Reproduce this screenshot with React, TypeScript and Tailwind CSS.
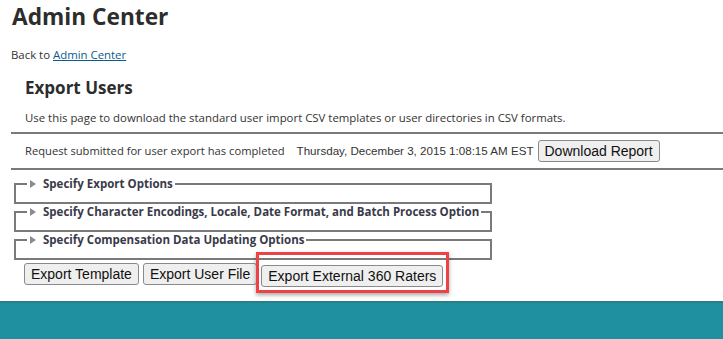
import React from "react";

const sans = "font-['Open_Sans',sans-serif]";
const arial = "font-['Liberation_Sans',Arial,sans-serif]";

const sections = [
  "Specify Export Options",
  "Specify Character Encodings, Locale, Date Format, and Batch Process Option",
  "Specify Compensation Data Updating Options",
];

function Legend({ label }: { label: string }) {
  return (
    <legend className="ml-[11px] flex items-center pr-[2px] text-[11.5px] leading-[13px] font-bold text-[#3a3a4a]">
      <span className="mr-[7px] ml-[3px] inline-block h-0 w-0 border-y-[4px] border-l-[6px] border-y-transparent border-l-[#8c8c8c]" />
      {label}
    </legend>
  );
}

function Btn({ children }: { children: React.ReactNode }) {
  return (
    <button
      className={`${arial} h-[22px] rounded-[3px] border border-[#8a8a8a] bg-[#efefef] px-[6px] text-[14px] leading-[20px] text-[#111]`}
    >
      {children}
    </button>
  );
}

export default function App() {
  return (
    <div className={`${sans} h-[339px] w-[723px] overflow-hidden bg-white text-[#333]`}>
      <h1 className="ml-[12px] pt-[1px] text-[22.7px] leading-[32px] font-bold text-[#2d2d2d]">Admin Center</h1>
      <p className="ml-[11px] mt-[14px] text-[11.4px] leading-[15px] text-[#333]">
        Back to{" "}
        <a href="#" className="text-[#0b5a8c] underline">
          Admin Center
        </a>
      </p>

      <div className="ml-[11px] mt-[14px]">
        <h2 className="ml-[14px] text-[17px] leading-[24px] font-bold text-[#2d2d2d]">Export Users</h2>
        <p className="ml-[14px] mt-[10px] text-[11.4px] leading-[15px]">
          Use this page to download the standard user import CSV templates or user directories in CSV formats.
        </p>
        <div className="mt-[7px] border-t-2 border-[#7a7a7a]" />
        <div className="flex h-[34px] items-center pl-[14px] text-[11.2px]">
          <span>Request submitted for user export has completed</span>
          <span className={`${arial} ml-[12px] text-[11.6px]`}>Thursday, December 3, 2015 1:08:15 AM EST</span>
          <span className="ml-[4px]">
            <Btn>Download Report</Btn>
          </span>
        </div>
        <div className="border-t-2 border-[#7a7a7a]" />

        <div className="ml-[3px] mt-[7px] w-[478px]">
          {sections.map((s, i) => (
            <fieldset key={s} className={`border-2 border-[#7a7a7a] ${i === 0 ? "" : "mt-[1px]"}`}>
              <Legend label={s} />
              <div className="h-[12px]" />
            </fieldset>
          ))}
        </div>

        <div className="ml-[13px] mt-[3px] flex gap-[4px]">
          <Btn>Export Template</Btn>
          <Btn>Export User File</Btn>
          <span className="relative">
            <Btn>Export External 360 Raters</Btn>
            <span className="pointer-events-none absolute -left-[5px] -right-[6px] -top-[11px] -bottom-[6px] border-[3px] border-[#ee4346] shadow-[0_2px_4px_rgba(0,0,0,0.35)]" />
          </span>
        </div>
      </div>

      <div className="mt-[14px] h-[40px] border-t-2 border-[#287f8a] bg-[#1f90a0]" />
    </div>
  );
}
